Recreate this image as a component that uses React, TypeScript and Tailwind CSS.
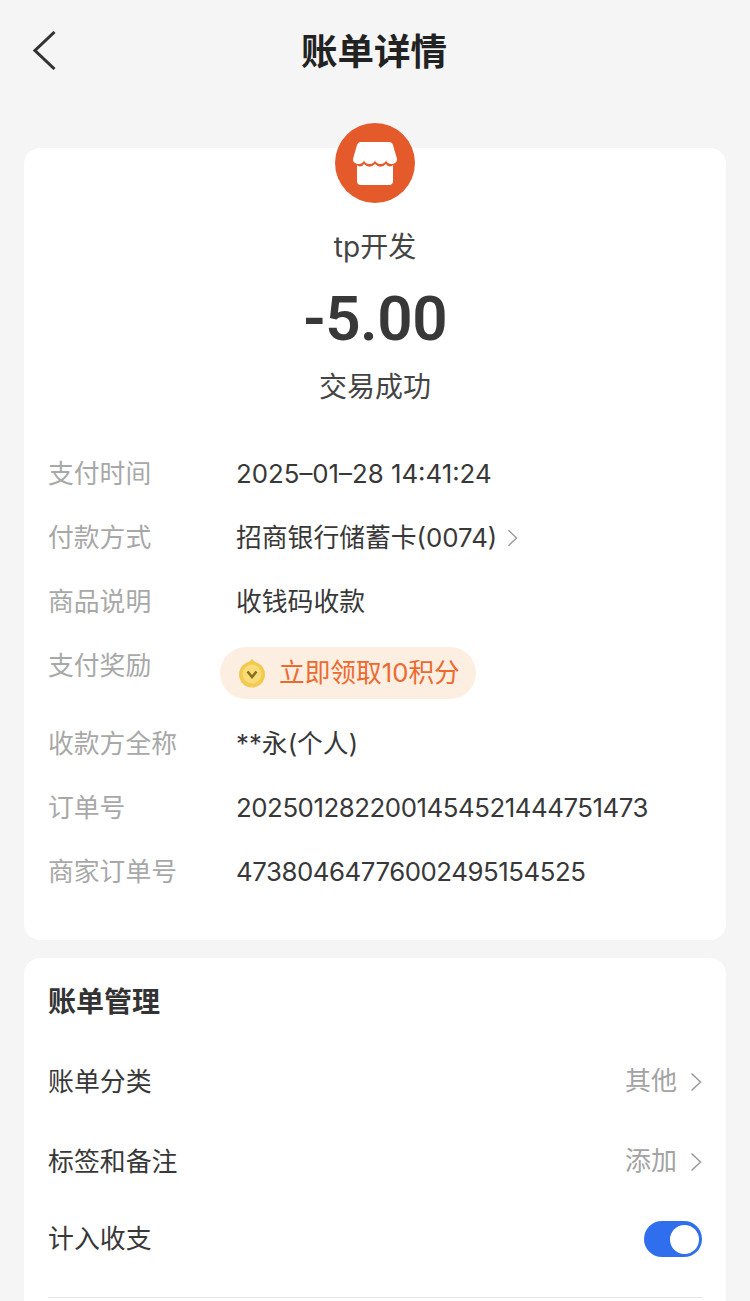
// App.tsx
import React from "react";

const CJK = "font-['Inter','Noto_Sans_CJK_SC',sans-serif]";

const details = [
  { label: "支付时间", value: "2025–01–28 14:41:24" },
  { label: "付款方式", value: "招商银行储蓄卡(0074)", arrow: true },
  { label: "商品说明", value: "收钱码收款" },
];

const payee = [
  { label: "收款方全称", value: "**永(个人)" },
  { label: "订单号", value: "2025012822001454521444751473", tight: true },
  { label: "商家订单号", value: "47380464776002495154525", tight: true },
];

const Chevron = ({ className }: { className: string }) => (
  <svg viewBox="0 0 12 20" fill="none" className={className}>
    <path d="M1.5 1.5 10.5 10 1.5 18.5" stroke="currentColor" strokeWidth="1.5" />
  </svg>
);

const StoreIcon = () => (
  <svg viewBox="0 0 80 80" className="h-[80px] w-[80px]">
    <circle cx="40" cy="40" r="40" fill="#e45a2a" />
    <path
      d="M26 19H54Q57 19 58 22L62 36V37a5.500 4 0 0 1-11 0a5.500 4 0 0 1-11 0a5.500 4 0 0 1-11 0a5.500 4 0 0 1-11 0V36L22 22Q23 19 26 19Z"
      fill="#fff"
    />
    <path
      d="M22 42Q26 45.500 29 41Q34.500 46.500 40 41Q45.500 46.500 51 41Q54 45.500 58 42V58a4 4 0 0 1-4 4H26a4 4 0 0 1-4-4Z"
      fill="#fff"
    />
  </svg>
);

const CoinIcon = () => (
  <svg viewBox="0 0 28 30" className="h-[30px] w-[28px]">
    <path d="M14 1 20 7H8Z" fill="#f3c94f" />
    <circle cx="14" cy="16.500" r="13" fill="#f3c94f" />
    <circle cx="14" cy="16" r="9.500" fill="#f7dc78" />
    <path d="M9.500 13.500 14 19l4.500-5.500" fill="none" stroke="#8a6d1c" strokeWidth="2.600" />
  </svg>
);

const DetailRow = ({
  label,
  value,
  arrow,
  tight,
}: {
  label: string;
  value: string;
  arrow?: boolean;
  tight?: boolean;
}) => (
  <div className="flex h-[64px] items-center">
    <div className="w-[188px] shrink-0 text-[25.800px] text-[#a8a8a8]">{label}</div>
    <div
      className={`flex items-center text-[25.800px] whitespace-nowrap text-[#383838] ${tight ? "tracking-[-0.45px]" : ""}`}
    >
      {value}
      {arrow && <Chevron className="ml-[10px] h-[18px] w-[11px] text-[#999]" />}
    </div>
  </div>
);

const ManageRow = ({ label, value }: { label: string; value: string }) => (
  <div className="flex h-[80px] items-center justify-between">
    <span className="text-[25.900px] text-[#383838]">{label}</span>
    <span className="flex items-center text-[26px] text-[#a3a3a3]">
      <span className="-mt-[3px]">{value}</span>
      <Chevron className="ml-[13px] h-[20px] w-[12px] text-[#999]" />
    </span>
  </div>
);

const App = () => {
  return (
    <div className={`h-[1301px] w-[750px] overflow-hidden bg-[#f5f5f5] ${CJK}`}>
      <header className="relative flex h-[148px] justify-center pt-[27px] pr-[2px]">
        <button className="absolute top-[31px] left-[33px] text-[#333]">
          <svg viewBox="0 0 23 39" fill="none" className="h-[39px] w-[23px]">
            <path d="M21.500 1 2 19.500 21.500 38" stroke="currentColor" strokeWidth="3" />
          </svg>
        </button>
        <h1 className="text-[36.500px] leading-[50px] font-bold text-[#222]">账单详情</h1>
      </header>

      <section className="mx-[24px] h-[792px] rounded-[16px] bg-white">
        <div className="flex -translate-y-[25px] flex-col items-center">
          <StoreIcon />
          <div className="mt-[24px] text-[28px] leading-[40px] text-[#444]">tp开发</div>
          <div className="mt-[17px] font-['Roboto',sans-serif] text-[62px] leading-[70px] font-semibold tracking-[-0.5px] text-[#383838]">
            -5.00
          </div>
          <div className="mt-[13px] text-[28px] leading-[40px] text-[#444]">交易成功</div>
        </div>

        <div className="mt-[10px] px-[24px]">
          {details.map((row) => (
            <DetailRow key={row.label} {...row} />
          ))}
          <div className="flex h-[78px] items-start">
            <div className="flex h-[64px] w-[172px] shrink-0 items-center text-[25.800px] text-[#a8a8a8]">
              支付奖励
            </div>
            <div className="mt-[13px] flex h-[52px] w-[256px] items-center rounded-full bg-[#fdeee2] pl-[18px]">
              <CoinIcon />
              <span className="ml-[13px] text-[25.700px] whitespace-nowrap text-[#ec6a2e]">立即领取10积分</span>
            </div>
          </div>
          {payee.map((row) => (
            <DetailRow key={row.label} {...row} />
          ))}
        </div>
      </section>

      <section className="mx-[24px] mt-[18px] rounded-[16px] bg-white px-[24px] pb-[20px]">
        <h2 className="pt-[25px] text-[28px] leading-[38px] font-bold text-[#333]">账单管理</h2>
        <div className="mt-[21px]">
          <ManageRow label="账单分类" value="其他" />
          <ManageRow label="标签和备注" value="添加" />
          <div className="flex h-[74px] items-center justify-between">
            <span className="text-[25.900px] text-[#383838]">计入收支</span>
            <span className="flex h-[36px] w-[58px] items-center justify-end rounded-full bg-[#2f6fed] pr-[3px]">
              <span className="h-[29px] w-[29px] rounded-full bg-white" />
            </span>
          </div>
          <div className="mt-[21px] h-px bg-[#e5e5e5]" />
        </div>
      </section>
    </div>
  );
};

export default App;
